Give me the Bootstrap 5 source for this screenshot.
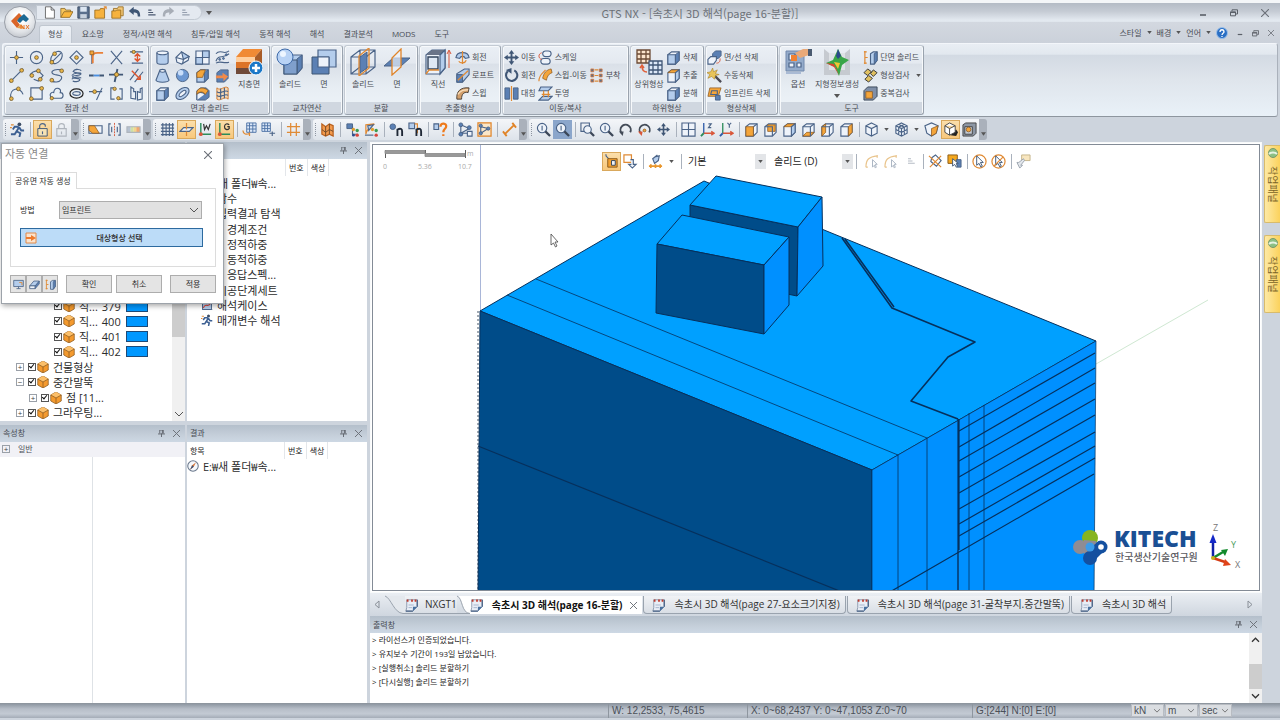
<!DOCTYPE html>
<html lang="ko">
<head>
<meta charset="utf-8">
<meta name="viewport" content="width=device-width, initial-scale=1">
<title>GTS NX</title>
<link href="https://cdn.jsdelivr.net/npm/bootstrap@5.3.0/dist/css/bootstrap.min.css" rel="stylesheet">
<style>
:root{--navy:#4a6387;--org:#e08a34;--ink:#474b53}
body{font-family:"Open Sans","Noto Sans CJK KR",sans-serif;font-size:8px;line-height:12px;color:var(--ink);background:#cdd4dd;overflow:hidden}
button,select,input{font:inherit;color:inherit}
button{border:0;background:none;padding:0}
a{color:inherit;text-decoration:none}
svg{flex:none;overflow:visible}
.i16{width:15px;height:15px}
.i28{width:28px;height:28px}
/* icon paint */
.s{fill:none;stroke:var(--navy);stroke-width:1.2}
.w{fill:#eef3fa;stroke:var(--navy);stroke-width:1.2}
.b{fill:#b4cdec;stroke:var(--navy);stroke-width:1.2}
.d{fill:#5b80b4;stroke:var(--navy);stroke-width:1}
.o{fill:none;stroke:var(--org);stroke-width:1.3}
.f{fill:#f4a53a;stroke:#8c5a20;stroke-width:.8}
.g{fill:none;stroke:#aeb4bc;stroke-width:1.2}
.k{fill:#e8b64a;stroke:#6b5428;stroke-width:.8}
/* title bar */
.titlebar{height:22px;border-top:3px solid #f4f6f8;background:linear-gradient(#b4bbc5,#c6ccd5 45%,#e3e9f0 90%,#dfe5ec)}
.apptitle{font-size:11px;color:#6c7178;font-family:"Noto Sans CJK KR",sans-serif}
.orb{left:4px;top:6px;width:32px;height:32px;border-radius:50%;border:1px solid #9a9fa8;background:radial-gradient(circle at 50% 35%,#fff 20%,#dfe2e6 60%,#a9aeb6)}
.qat{margin-left:36px;width:166px;height:15px;border:1px solid #c3cad3;border-radius:0 8px 8px 0;background:#e4e9f0;padding-left:4px}
.qat button{width:17px;height:14px;display:flex;align-items:center;justify-content:center}
.qat svg{width:13px;height:13px}
.wctl button{width:31px;display:flex;justify-content:center}
/* ribbon tabs */
.rtabs{height:21px;padding-left:39px;gap:1px;background:linear-gradient(#d3d8e0,#cbd1da)}
.rtabs a{padding:3px 9px 0;height:18px}
.rtabs a.on{background:linear-gradient(#eef2f7,#e4e9f0);border:1px solid #c0c7d0;border-bottom:0;border-radius:3px 3px 0 0;padding:2px 8px 0}
.rmenu{gap:5px;padding-right:6px;height:21px}
.ribbon{height:74px;margin:0 2px;padding:1px;gap:1px;border:1px solid #b7bec8;border-color:#f3f6fa #aab1bb #8e969f #f3f6fa;border-radius:3px;background:linear-gradient(#e9eef4,#e2e8ef 14%,#d3dae3 16%,#dfe5ec 50%,#e9f1f8)}
.rgrp{display:flex;flex-direction:column;border:1px solid #a9b2bd;border-color:#c3cad3 #9aa3ae #9aa3ae #c3cad3;border-radius:3px;box-shadow:inset 0 0 0 1px #f7f9fb;background:linear-gradient(#eaeff5,#e4e9f0 25%,#dae0e8 27%,#e7edf3 60%,#eef4f9);padding-top:2px}
.rgrp footer{height:12px;line-height:12px;margin:0 1px;text-align:center;background:#d0d7e0}
.rbody{height:56px;display:flex;padding:0 1px}
.tools{display:grid;grid-template-rows:repeat(3,18px);grid-auto-columns:20px;grid-auto-flow:column;align-content:start}
.tools button{display:flex;align-items:center;justify-content:center}
.rows3{display:grid;grid-template-rows:repeat(3,18px);grid-auto-flow:column;align-content:start;column-gap:2px}
.rows3 button,.rows3 div{display:flex;align-items:center;gap:2px;white-space:nowrap}
.bigb{display:flex;flex-direction:column;align-items:center;min-width:34px;white-space:nowrap}
.bigb svg{margin-bottom:2px}
.g1{width:145px}.g2{width:120px}.g3{width:72px}.g4{width:74px}.g5{width:82px}.g6{width:127px}.g7{width:74px}.g8{width:73px}.g9{width:145px}
/* toolbars */
.tbars{height:25px;padding:2px 3px;background:#cdd4dd}
.tbar{height:21px;display:flex;align-items:center;padding-left:2px;background:linear-gradient(#f4f6f9,#dde3ea);border-radius:3px 0 0 3px}
.tbar:before{content:"";width:2px;height:13px;margin-right:1px;border-left:1px dotted #8c94a0}
.tbar button,.vbar button{width:19px;height:19px;display:flex;align-items:center;justify-content:center}
.tbar button.hl,.vbar button.hl{background:linear-gradient(#fbe0ae,#f8c679);outline:1px solid #d9a85c;outline-offset:-1px}
.tbar button.bl{background:#8ba6cb}
.tbar .dd{width:11px}
.sep{width:6px;height:15px;background:linear-gradient(#a9b1bc,#a9b1bc) center/1px 100% no-repeat}
.tend{width:8px;height:21px;background:#aab1bb;border-radius:0 3px 3px 0;display:flex;align-items:end;justify-content:center;margin-right:2px}
/* panes */
.dock{width:370px;gap:2px;padding-right:3px}
.lcol{width:185px}
.pane{background:#fff;flex:1 1 0;min-height:0;overflow:hidden}
.phead{height:17px;flex:none;display:flex;align-items:center;padding:0 5px 0 3px;background:linear-gradient(#b4bfcb,#c5cfda 60%,#cdd8e4)}
.phead svg{margin-left:8px}
.chead{display:flex;height:17px;flex:none;align-items:center;font-size:8px;color:#222}
.chead span{height:17px;line-height:17px;padding:0 3px;border-right:1px solid #e3e6ea}
.tree{font-size:11px;line-height:15px;color:#2c2c2c;margin:0;white-space:nowrap}
.tree li{display:flex;align-items:center;height:15px}
.tree .lv1{padding-left:14px}.tree .lv2{padding-left:30px}.tree .lv3{padding-left:40px}
.tree input{appearance:none;width:8px;height:8px;margin:0 1px 0 0;border:1px solid #555;background:#fff;position:relative;flex:none}
.tree input:checked:after{content:"";position:absolute;left:1px;top:-1px;width:3px;height:5px;border:solid #111;border-width:0 1px 1px 0;transform:rotate(40deg)}
.ltree{height:122px}.rtree{height:152px}
.ltree .lv2{padding-left:27px}.ltree .lv3{padding-left:54px}
.num{width:24px}
.swatch{width:22px;height:11px;background:#0098ff;border:1px solid #1d4a78}
.exp{width:8px;height:8px;border:1px solid #9aa0a8;margin:0 4px 0 2px;font-size:8px;line-height:5px;text-align:center;color:#444;flex:none}
.vscroll{width:13px;background:#f0f0f0;flex:none}
.thumb{background:#cdcdcd}
/* dialog */
.dlg{left:1px;top:1px;width:223px;height:161px;background:#fff;border:1px solid #9da3aa;box-shadow:1px 2px 5px #0005;z-index:5;padding:0 7px 0 8px;color:#2c2c2c}
.dlg h1{font-size:11px;line-height:20px;margin:0 0 0 -5px;color:#8a8a8a}
.dtab{border:1px solid #dcdcdc;border-bottom:0;width:67px;height:17px;line-height:15px;padding-left:4px;white-space:nowrap;background:#fff;margin-bottom:-1px;position:relative}
.dbox{border:1px solid #dcdcdc;height:79px;padding:12px 13px 0 9px}
.dsel{width:143px;height:18px;border:1px solid #adadad;border-radius:0;background:#e1e1e1;padding:0 2px;font-size:8px;color:#333;appearance:none}
.dpick{width:183px;height:19px;border:1px solid #2d6a9f;background:#bcdcf8;font-weight:500;margin-top:9px;padding-left:4px}
.dbtn{height:18px;width:46px;border:1px solid #adadad;background:#e4e4e4}
.dbtn.sm{width:16px}
/* viewport */
.view{border:1px solid #f8fafb;outline:1px solid #838b96;outline-offset:-3px;background:#fff;padding:2px 2px 1px;min-height:0}
.vbar{left:231px;top:8px;height:20px;color:#222;font-size:10px}
.vbar select{appearance:none;border:0;background:#fff;font-size:10px;padding:0}
.vbar .arr{width:11px;height:15px;background:#e3e5e8;display:flex;align-items:center;justify-content:center}
.pick1{width:71px}.pick2{width:76px}
/* document tabs */
.dtabs{height:23px;padding-top:3px;background:linear-gradient(#eaeef3,#cfd6df);font-size:10px;line-height:17px;color:#333}
.dtabs a{height:18px;display:flex;align-items:center;white-space:nowrap;gap:8px;border:1px solid #9aa3ae;border-top:0;border-radius:0 0 4px 4px;background:linear-gradient(#f0f2f5,#d9dee5);padding:0 5px 0 8px;margin-right:1px}
.dtabs a.cur{background:#fff;font-weight:700;color:#111;border:0;border-radius:0;padding-left:0}
.dtabs a.fst{border-left:0;border-right:0;border-radius:0;gap:6px;margin:0;padding:0}
.out{height:70px;background:#fff;color:#222;line-height:14px}
.out p{margin:0;padding-left:2px}
.side{width:16px;margin-left:2px;padding-top:3px;gap:12px}
.side button{height:78px;width:16px;background:linear-gradient(90deg,#fde9a4,#fbd25c);border:1px solid #d8bb6c;border-right:0;display:flex;flex-direction:column;align-items:center;gap:8px;padding-top:2px;font-size:10px;color:#7a6428;border-radius:2px 0 0 2px}
.side span{writing-mode:vertical-rl;text-orientation:sideways;line-height:12px}
.status{height:15px;border-top:1px solid #8e969f;background:linear-gradient(#8f98a3,#b7bec8 35%,#c3cad3 70%,#a4acb7);font-family:"Liberation Sans","Noto Sans CJK KR",sans-serif;font-size:10px;line-height:14px;color:#4b5058;white-space:nowrap;margin-bottom:2px;gap:1px}
.status>div{border-left:1px solid #8e969f;padding-left:3px}
.st1{width:138px}.st2{width:224px}.st3{width:158px}
.status select{appearance:none;border:1px solid #b8bcc2;background:#dadde1;height:13px;width:33px;padding:0 2px;line-height:11px;border-radius:0}
.chev{position:relative}
.chev svg{position:absolute;right:4px;top:50%;margin-top:-2px;pointer-events:none}
</style>
</head>
<body class="d-flex flex-column vh-100">
<svg width="0" height="0" class="position-absolute" aria-hidden="true"><defs>
<symbol id="dn" viewBox="0 0 6 4"><path d="M0 0h6L3 4z" fill="#555"/></symbol>
<symbol id="cv" viewBox="0 0 8 5"><path d="M0 0l4 4 4-4" fill="none" stroke="#555"/></symbol>
<symbol id="x" viewBox="0 0 8 8"><path d="M0 0l8 8M8 0L0 8" fill="none" stroke="#6b7078" stroke-width="1.1"/></symbol>
<symbol id="pin" viewBox="0 0 8 8"><path d="M2 0h4v4M2 0v4M5 0v4M0 4.500h8M4 4v4" fill="none" stroke="#5b6068"/></symbol>
<symbol id="min" viewBox="0 0 8 8"><path d="M1 6h6" stroke="#5b6068" stroke-width="1.6"/></symbol>
<symbol id="res" viewBox="0 0 8 8"><path d="M2 2V.800h5.500V5H6M.5 2.800h5v4h-5zM.5 3.500h5" fill="none" stroke="#5b6068"/></symbol>
<symbol id="new" viewBox="0 0 16 16"><path d="M3 1h7l4 4v10H3zM10 1v4h4" fill="#fff" stroke="#555"/></symbol>
<symbol id="open" viewBox="0 0 16 16"><path d="M1 14V3h5l1 2h6v3" fill="#f7c65c" stroke="#8a6a2a"/><path d="M1 14l4-7h11l-4 7z" fill="#f9b63c" stroke="#8a6a2a"/></symbol>
<symbol id="save" viewBox="0 0 16 16"><path d="M1 1h14v14H1z" fill="#5a6f8c" stroke="#33445c"/><path d="M4 1h8v6H4z" fill="#dce6f2"/><path d="M4 10h8v5H4z" fill="#c8d2de"/></symbol>
<symbol id="fold" viewBox="0 0 16 16"><path d="M1 5h6l1-2h5v12H1z" fill="#f6b23e" stroke="#94691f"/><path d="M11 4l4-3M12 1h3v3" class="o"/></symbol>
<symbol id="fold2" viewBox="0 0 16 16"><path d="M3 3h5l1-2h6v11H3z" fill="#f4c978" stroke="#94691f"/><path d="M1 6h5l1-1h5v10H1z" fill="#f6b23e" stroke="#94691f"/></symbol>
<symbol id="undo" viewBox="0 0 16 16"><path d="M1 6l6-5v3c6 0 8 3 8 9h-3c0-4-1-5-5-5v3z" fill="#3f5675"/></symbol>
<symbol id="redo" viewBox="0 0 16 16"><path d="M15 6L9 1v3C3 4 1 7 1 13h3c0-4 1-5 5-5v3z" fill="#a7adb6"/></symbol>
<symbol id="lst" viewBox="0 0 16 16"><path d="M4 5h4M4 8h6M4 11h9" stroke="#4a5870" stroke-width="1.500"/></symbol>
<symbol id="p1" viewBox="0 0 16 16"><path d="M8 1v14M1 8h14" class="s"/><circle cx="8" cy="8" r="2" class="k"/></symbol>
<symbol id="p2" viewBox="0 0 16 16"><path d="M1 15L15 1" class="s"/><circle cx="2.500" cy="13.500" r="2" class="k"/><circle cx="13.500" cy="2.500" r="2" class="k"/></symbol>
<symbol id="p3" viewBox="0 0 16 16"><path d="M2 13C0 2 12 0 15 9" class="s"/><circle cx="2.500" cy="13.500" r="2" class="k"/><circle cx="10" cy="3" r="2" class="k"/></symbol>
<symbol id="p4" viewBox="0 0 16 16"><circle cx="8" cy="8" r="6.500" class="s"/><circle cx="8" cy="8" r="2" class="k"/></symbol>
<symbol id="p5" viewBox="0 0 16 16"><path d="M1 8c1-3 5-5 9-5l5 5-5 6-5-2" class="s"/><circle cx="3" cy="8" r="2" class="k"/><circle cx="10" cy="3" r="2" class="k"/><circle cx="12" cy="12" r="2" class="k"/></symbol>
<symbol id="p6" viewBox="0 0 16 16"><path d="M2 2h12v12H2z" class="s"/><circle cx="2.500" cy="13.500" r="2" class="k"/><circle cx="13.500" cy="2.500" r="2" class="k"/></symbol>
<symbol id="p7" viewBox="0 0 16 16"><ellipse cx="8" cy="8" rx="5" ry="7.500" transform="rotate(40 8 8)" class="s"/><path d="M3 13L13 3" class="s"/><circle cx="6" cy="4" r="2" class="k"/><circle cx="3" cy="13" r="2" class="k"/></symbol>
<symbol id="p8" viewBox="0 0 16 16"><path d="M14 2C2 0 1 6 6 7s9 1 7 5-8 3-10 2" class="s"/><circle cx="13.500" cy="3" r="2" class="k"/><circle cx="3" cy="13" r="2" class="k"/></symbol>
<symbol id="p9" viewBox="0 0 16 16"><path d="M3 13C-1 9 3 6 5 7 6 0 14 2 12 7c4 0 4 6 0 6z" class="s"/><circle cx="3" cy="13" r="1.800" class="k"/></symbol>
<symbol id="p10" viewBox="0 0 16 16"><path d="M8 1l7 7-7 7-7-7z" class="s"/><circle cx="8" cy="8" r="2" class="k"/></symbol>
<symbol id="p11" viewBox="0 0 16 16"><path d="M4 14c8 2 10-3 4-3s-5-3 0-3 7-3 1-3-5-3 0-4M3 12c2-3 9-3 10-1M3 8c2-3 9-3 10-1M4 4c2-3 8-3 9-1" class="s"/></symbol>
<symbol id="p12" viewBox="0 0 16 16"><ellipse cx="8" cy="8" rx="7" ry="5" fill="none" stroke="#222" stroke-width="1.300"/><ellipse cx="8" cy="8" rx="4" ry="2" class="s"/></symbol>
<symbol id="p13" viewBox="0 0 16 16"><path d="M3 15V3" class="s"/><path d="M4 14V8c0-4 1-5 5-5h6" fill="none" stroke="#e9803a" stroke-width="2"/><path d="M1 1h4v4H1z" class="f"/></symbol>
<symbol id="p14" viewBox="0 0 16 16"><path d="M0 8h5M11 8h5" stroke="#3f5675" stroke-width="2"/><path d="M5 8h6" stroke="#4a8fe0" stroke-width="2"/></symbol>
<symbol id="p15" viewBox="0 0 16 16"><path d="M0 6h14M14 2L8 15" class="s"/><circle cx="6" cy="6" r="2" class="k"/></symbol>
<symbol id="p16" viewBox="0 0 16 16"><path d="M2 1l12 14M14 1L2 15" class="s" stroke-width="1.500"/></symbol>
<symbol id="p17" viewBox="0 0 16 16"><path d="M0 7h15M9 1L6 15" stroke="#3f5675" stroke-width="2"/><circle cx="8" cy="7" r="2.200" class="k"/></symbol>
<symbol id="p18" viewBox="0 0 16 16"><path d="M5 2H2v12h4M10 14h4V3h-3" class="s"/><circle cx="6" cy="3" r="1.800" class="k"/><circle cx="10" cy="13" r="1.800" class="k"/></symbol>
<symbol id="p19" viewBox="0 0 16 16"><path d="M1 2h14M3 14h12" class="s"/><path d="M9 4v8M6 7l3-3 3 3M6 9l3 3 3-3" fill="none" stroke="#e0552c" stroke-width="1.500"/><circle cx="5" cy="2" r="1.800" class="k"/></symbol>
<symbol id="p20" viewBox="0 0 16 16"><path d="M1 13L10 1M6 15l9-11" class="s"/><path d="M3 3l9 9M8 12h4V8" fill="none" stroke="#e0552c" stroke-width="1.500"/></symbol>
<symbol id="p21" viewBox="0 0 16 16"><path d="M2 1v12l5 1V6H5V3zM9 6v9l5-1V2l-2 1v4z" class="s"/></symbol>
<symbol id="cyl" viewBox="0 0 16 16"><path d="M2 3v10c0 3 12 3 12 0V3" class="b"/><ellipse cx="8" cy="3" rx="6" ry="2" class="w"/></symbol>
<symbol id="cone" viewBox="0 0 16 16"><path d="M5 3L1 13c1 3 13 3 14 0L11 3" class="b"/><ellipse cx="8" cy="3" rx="3" ry="1.500" class="w"/></symbol>
<symbol id="box" viewBox="0 0 16 16"><path d="M2 5l4-3h8v9l-4 4H2z" class="w"/><path d="M10 5l4-3v9l-4 4z" class="d"/><path d="M2 5h8v10H2z" class="b"/></symbol>
<symbol id="wedge" viewBox="0 0 16 16"><path d="M1 8l6-6 8 5-1 4-7 4-5-2z" class="w"/><path d="M7 2l2 8 6-3z" class="b"/><path d="M1 8l8 2-1 5" class="s"/></symbol>
<symbol id="ball" viewBox="0 0 16 16"><circle cx="8" cy="8" r="6.500" fill="#6d98d2" stroke="#4a6387"/><circle cx="6" cy="5" r="3" fill="#c9defa"/></symbol>
<symbol id="ring" viewBox="0 0 16 16"><ellipse cx="8" cy="8" rx="8" ry="5" transform="rotate(-40 8 8)" class="b"/><ellipse cx="8" cy="8" rx="4.500" ry="2" transform="rotate(-40 8 8)" class="w"/></symbol>
<symbol id="quad" viewBox="0 0 16 16"><path d="M1 1h14v14H1z" class="w"/><path d="M1 8h7V1h7v7H8v7H1z" class="b"/></symbol>
<symbol id="boxo" viewBox="0 0 16 16"><path d="M2 5l4-3h8v9l-4 4H2z" class="w"/><path d="M2 5l4-3h8l-4 3z" class="f"/><path d="M10 5l4-3v9l-4 4z" class="b"/></symbol>
<symbol id="boxk" viewBox="0 0 16 16"><path d="M2 5l4-3h8v9l-4 4H2z" class="w"/><path d="M5 3h8v7H5z" class="f"/><path d="M2 5h8v10" class="s"/></symbol>
<symbol id="boxq" viewBox="0 0 16 16"><path d="M2 5l4-3h8v9l-4 4H2z" class="b"/><path d="M10 5l4-3v9l-4 4z" class="d"/><path d="M2 5l4-3h5l-3 8H2z" class="f"/></symbol>
<symbol id="boxf" viewBox="0 0 16 16"><path d="M2 5l4-3h8v9l-4 4H2z" class="w"/><path d="M10 5l4-3M10 5v10" class="s"/><path d="M2 5h8v10H2z" class="f"/></symbol>
<symbol id="boxr" viewBox="0 0 16 16"><path d="M2 5l4-3h8v9l-4 4H2zM2 5h8v10" class="w"/><path d="M10 5l4-3v9l-4 4z" class="f"/></symbol>
<symbol id="boxb" viewBox="0 0 16 16"><path d="M2 5l4-3h8v9l-4 4H2z" class="w"/><path d="M2 15l4-4h8l-4 4z" class="f"/><path d="M2 5h8v10M10 5l4-3" class="s"/></symbol>
<symbol id="boxl" viewBox="0 0 16 16"><path d="M2 5l4-3h8v9l-4 4H2z" class="w"/><path d="M2 5l4-3v9l-4 4z" class="f"/><path d="M2 5h8v10M10 5l4-3" class="s"/></symbol>
<symbol id="fan" viewBox="0 0 16 16"><path d="M2 5l4-3h6l3 3v7l-4 3H2z" class="d"/><path d="M2 15V9c0-3 8-3 8 0" class="w"/><path d="M2 6c2-5 8-5 12-1l-3 4C9 6 5 5 2 9z" class="f"/></symbol>
<symbol id="surf" viewBox="0 0 16 16"><path d="M1 4c5-6 8 2 14-3M1 14c5-3 8 1 14-1M1 12c3-8 7-2 14-8" class="s"/><circle cx="5" cy="10" r="1" class="d"/><circle cx="9" cy="9" r="1" class="d"/><circle cx="12" cy="5" r="1" class="d"/></symbol>
<symbol id="boxa" viewBox="0 0 16 16"><path d="M2 5l4-3h8v9l-4 4H2z" class="d"/><path d="M1 8h7V5l6 4-5 5v-3H1z" fill="#f08a4a"/></symbol>
<symbol id="weave" viewBox="0 0 16 16"><path d="M2 2c4 4 8-3 12 0v12c-4-4-8 3-12 0z" fill="#f6d8b4" stroke="#d07a30"/><path d="M2 6c4 4 8-3 12 0M2 10c4 4 8-3 12 0M6 3v11M10 2v11" class="s"/></symbol>
<symbol id="weaveo" viewBox="0 0 16 16"><path d="M2 2l4 3 4-3 4 2v11l-4-2-4 2-4-2z" fill="#f39a4c" stroke="#b85f1c" stroke-width="1.300"/><path d="M6 5v10M10 2v11M2 8l4 3 4-3 4 2" stroke="#6d4a2a" fill="none"/></symbol>
<symbol id="L1" viewBox="0 0 28 28"><path d="M1 9L8 1h19L20 9z" fill="#f08a35"/><path d="M1 9h19v5H1z" fill="#ffcf9e"/><path d="M1 14h19v6H1z" fill="#dc7428"/><path d="M1 20h19v6H1z" fill="#6f4a3a"/><path d="M20 9l7-8v17l-7 8z" fill="#a85c28"/><circle cx="21" cy="20" r="7" fill="#1b78c8" stroke="#fff"/><path d="M21 16v8M17 20h8" stroke="#fff" stroke-width="2.500"/></symbol>
<symbol id="L2" viewBox="0 0 28 28"><path d="M8 12l6-5h12v13l-5 6H8z" class="b"/><path d="M21 11l5-4v13l-5 6z" class="d"/><path d="M8 12h13v14H8z" fill="#7f9fcc" stroke="#3f5675"/><circle cx="9" cy="9" r="8" fill="#b9d3f5" stroke="#3f6aa8"/><circle cx="7" cy="6" r="3" fill="#eef6ff"/></symbol>
<symbol id="L3" viewBox="0 0 28 28"><path d="M8 2h18v17H8z" class="b"/><path d="M2 9h17v17H2z" fill="#5b80b4" stroke="#3f5675"/><path d="M8 9h11v10H8z" class="w"/></symbol>
<symbol id="L4" viewBox="0 0 28 28"><path d="M2 9l9-7h15v17l-9 7H2zM2 9h15v17M17 9l9-7M11 2v17l-9 7M11 19h15" class="s"/><path d="M11 9l7-5v16l-7 5z" class="d"/><path d="M10 8l10-8v20l-10 8z" class="o"/></symbol>
<symbol id="L5" viewBox="0 0 28 28"><path d="M1 18L10 10h17l-9 8z" class="d"/><path d="M9 10v17l9-8V1z" fill="#eef3faaa" stroke="#e08428" stroke-width="1.300"/></symbol>
<symbol id="L6" viewBox="0 0 28 28"><path d="M2 7l6-5h13v18l-5 6H2z" class="w"/><path d="M2 7l6-5h13l-5 5z" fill="#6a7488"/><path d="M16 7l5-5v18l-5 6z" class="b"/><path d="M4 9h10v12H4z" fill="#dfe8f4" stroke="#33445c" stroke-width="1.400"/><path d="M2 26l3-4h10" class="o"/><path d="M25 20V3M23 6l2-4 2 4" stroke="#d9573a" fill="none"/></symbol>
<symbol id="L7" viewBox="0 0 28 28"><path d="M2 2h13v13H2zM6 2v13M11 2v13M2 6h13M2 11h13" fill="#fbe4cc" stroke="#6b4a34" stroke-width="1.300"/><path d="M14 13h13v13H14zM18 13v13M23 13v13M14 17h13M14 22h13" fill="#dce8f8" stroke="#3f5675" stroke-width="1.300"/><path d="M12 24c-4 0-5-2-5-6M5 20l2-3 2 3" fill="none" stroke="#e0603a" stroke-width="1.500"/></symbol>
<symbol id="L8" viewBox="0 0 28 28"><path d="M2 3h18v20H2z" fill="#94abca" stroke="#7088ac"/><path d="M5 6h6v6H5z" class="w"/><path d="M7 7h6v6H7z" fill="#f08030"/><path d="M13 15h4v4h-4zM5 15h5v4H5z" class="w"/><path d="M2 25h15" stroke="#a9bad4" stroke-width="2"/><path d="M11 5l8-4h6v6l-9 3z" fill="#e9a978"/><path d="M24 1h4v7h-4z" fill="#4a5a70"/></symbol>
<symbol id="L9" viewBox="0 0 28 28"><path d="M1 1l5 4v17l-5 5zM27 1l-5 4v17l5 5zM6 22h16l5 5H1z" fill="#c6cad0"/><path d="M6 5h16v17H6z" fill="#dfe2e6"/><path d="M15 1l4 8 7 3-7 5-3 11-4-9-9-4 7-3z" fill="#3aa648"/><path d="M15 1l3 7-3 3-2-3z" fill="#2c4a8c"/><path d="M3 15l8 1 5 11-5-8z" fill="#d8452e"/><path d="M11 14l6 1-2 6z" fill="#f2c534"/></symbol>
<symbol id="mir" viewBox="0 0 16 16"><path d="M1 2h5v12H1zM10 2h5v12h-5z" class="d"/><path d="M8 0v16" class="o"/></symbol>
<symbol id="rev" viewBox="0 0 16 16"><path d="M1 8C2 1 14 1 15 8l-4 1c-1-3-5-3-6 0z" class="b"/><path d="M8 1v14M4 12c2 3 7 2 8-1" class="o"/></symbol>
<symbol id="loft" viewBox="0 0 16 16"><path d="M2 6l8-5h5v6L8 15H2z" class="b"/><path d="M2 7h6v8H2z" class="d"/><path d="M3 13L14 3" class="o"/></symbol>
<symbol id="swp" viewBox="0 0 16 16"><path d="M2 14C1 6 6 1 15 2l-1 5C9 6 7 9 7 14z" fill="#d3a06c" stroke="#4a4038"/><path d="M3 9c3-5 7-5 11-5" stroke="#f8dcb8" fill="none" stroke-width="1.500"/></symbol>
<symbol id="mv" viewBox="0 0 16 16"><path d="M8 0l3 4H9v3h3V5l4 3-4 3V9H9v3h2l-3 4-3-4h2V9H4v2L0 8l4-3v2h3V4H5z" fill="#3f5675"/></symbol>
<symbol id="rot" viewBox="0 0 16 16"><path d="M11 2.500A6 6 0 1 1 4 3.500" fill="none" stroke="#3f5675" stroke-width="2.200"/><path d="M8 0v6L2 2z" fill="#3f5675"/></symbol>
<symbol id="scl" viewBox="0 0 16 16"><rect x="5" y="1" width="9" height="6" rx="3" class="w"/><rect x="3" y="9" width="10" height="6" rx="3" class="w"/><path d="M4 3c-4 1-4 6 0 7" stroke="#d9573a" fill="none"/></symbol>
<symbol id="swm" viewBox="0 0 16 16"><path d="M1 14C1 7 6 5 8 2" class="o" stroke-width="2.500"/><path d="M5 11c1-6 4-9 9-10l1 4c-3 1-5 3-6 8z" class="f"/></symbol>
<symbol id="prj" viewBox="0 0 16 16"><path d="M3 1h12l-4 4H1zM5 11h10l-4 4H1z" class="b"/><path d="M6 5v7M11 5v7M4 9h9" class="o"/></symbol>
<symbol id="att" viewBox="0 0 16 16"><path d="M2 1h3v3H2zM2 6.500h3v3H2zM2 12h3v3H2zM11 1h3v3h-3zM11 6.500h3v3h-3zM11 12h3v3h-3z" fill="#5f6f88" stroke="#d9773a" stroke-width=".8"/><path d="M6 2h4M6 8h4M6 14h4" class="o"/></symbol>
<symbol id="del" viewBox="0 0 16 16"><path d="M6 4l3-3h6v5l-3 3H6z" class="d"/><path d="M1 10l3-3h6v4l-3 4H1z" class="w"/><path d="M10 14c4 0 4-3 4-5" stroke="#d9573a" fill="none"/></symbol>
<symbol id="wand" viewBox="0 0 16 16"><path d="M7 7l8 8" stroke="#4a4a55" stroke-width="2.500"/><path d="M6 0l1 4 4-2-2 4 4 1-4 1-1 4-3-3-4 2 2-4-3-2 4-1z" fill="#e8c45a" stroke="#a87c20" stroke-width=".6"/></symbol>
<symbol id="imp" viewBox="0 0 16 16"><path d="M3 2h12l-3 9H1z" class="f"/><path d="M5 5h6v4H4z" class="s"/><path d="M9 10h5v5H9z" class="d"/></symbol>
<symbol id="sec" viewBox="0 0 16 16"><path d="M2 1v14M5 8H2M1 2h3M1 14h3" class="o" stroke-width="1.600"/><path d="M8 4l3-2h4v9l-3 4H8z" class="b"/><path d="M12 4l3-2v9l-3 4z" class="d"/></symbol>
<symbol id="chk" viewBox="0 0 16 16"><path d="M5 1l4 3-4 4-4-3zM11 2l4 3-4 4-3-3zM6 8l4 3-4 4-4-3z" fill="#e0c060" stroke="#333"/></symbol>
<symbol id="dup" viewBox="0 0 16 16"><path d="M1 5l4-4h10v10l-4 4H1z" fill="#7f8fa8" stroke="#3a4658"/><path d="M3 6h7v7H3z" class="f"/></symbol>
<symbol id="run" viewBox="0 0 16 16"><circle cx="10" cy="2.500" r="2" fill="#3c4d66"/><path d="M10 5L7 10l4 2-1 4M7 10l-2 3H1M9 5L5 5 3 8M10 6l2 3h3" fill="none" stroke="#3c5f92" stroke-width="2"/><path d="M1 3h3M0 6h2" class="o"/></symbol>
<symbol id="lock" viewBox="0 0 16 16"><path d="M5 7V4c0-3 6-3 6 0v1" class="s" stroke-width="1.600"/><path d="M3 7h10v8H3z" fill="#f6e2b4" stroke="#3f5675"/><path d="M8 10v3" class="s"/></symbol>
<symbol id="lockg" viewBox="0 0 16 16"><path d="M5 7V4c0-3 6-3 6 0v3M3 7h10v8H3zM8 10v3" class="g"/></symbol>
<symbol id="era" viewBox="0 0 16 16"><path d="M1 4h14v8H1z" class="w"/><path d="M1 4h6l5 8H5L1 9z" class="f"/></symbol>
<symbol id="brk" viewBox="0 0 16 16"><path d="M4 2H2v12h2M12 2h2v12h-2M5 5v6M11 5v6" class="s"/><path d="M8 1v14" stroke="#d9573a" stroke-dasharray="2 1"/></symbol>
<symbol id="clr" viewBox="0 0 16 16"><path d="M1 5h4v6H1z" fill="#b6c2d2"/><path d="M5 5h3v6H5z" fill="#cfe0a4"/><path d="M8 5h3v6H8z" fill="#f2d88a"/><path d="M11 5h4v6h-4z" fill="#f0a870"/><path d="M1 5h14v6H1z" class="g"/></symbol>
<symbol id="grd" viewBox="0 0 16 16"><path d="M3 1v14M6.500 1v14M10 1v14M13.500 1v14M1 3h14M1 6.500h14M1 10h14M1 13.500h14" class="s"/></symbol>
<symbol id="grdo" viewBox="0 0 16 16"><path d="M5 1v14M11 1v14M1 5h14M1 11h14" class="o" stroke-width="1.600"/></symbol>
<symbol id="pln" viewBox="0 0 16 16"><path d="M1 10l4-4h10l-4 4z" class="w"/><path d="M8 1v7M8 10v5" class="o"/></symbol>
<symbol id="axW" viewBox="0 0 16 16"><path d="M3 1v12h11" fill="none" stroke="#2c8c5a" stroke-width="1.500"/><path d="M6 2l1 6 2-4 2 4 2-6" stroke="#333" fill="none" stroke-width="1.300"/><circle cx="3" cy="13" r="2" fill="#d9573a"/></symbol>
<symbol id="axG" viewBox="0 0 16 16"><path d="M3 1v12h11" fill="none" stroke="#2c8c5a" stroke-width="1.500"/><path d="M13 3c-2-2-5-1-5 2s3 4 5 2V5h-2" stroke="#333" fill="none" stroke-width="1.300"/><circle cx="3" cy="13" r="2" fill="#d9573a"/></symbol>
<symbol id="axz" viewBox="0 0 16 16"><path d="M4 1v11" stroke="#2c5aa8" stroke-width="1.400"/><path d="M4 12h10M12 10l3 2-3 2" stroke="#d9573a" fill="none" stroke-width="1.400"/><path d="M1 15l3-3" stroke="#2c8c5a" stroke-width="2"/><path d="M9 2h3L9 6h3" class="s"/></symbol>
<symbol id="axy" viewBox="0 0 16 16"><path d="M4 1v11" stroke="#2c8c5a" stroke-width="1.400"/><path d="M4 12h10M12 10l3 2-3 2" stroke="#d9573a" fill="none" stroke-width="1.400"/><path d="M1 15l3-3" stroke="#2c5aa8" stroke-width="2"/><path d="M9 1l2 2 2-2M11 3v3" class="s"/></symbol>
<symbol id="tbl" viewBox="0 0 16 16"><path d="M5 1h10v10H5zM8 1v10M11.500 1v10M5 4h10M5 7.500h10" fill="#dce8f8" stroke="#4f74a8"/><path d="M1 9c0 4 4 5 7 3v3" class="o"/></symbol>
<symbol id="tbl2" viewBox="0 0 16 16"><path d="M1 1h9v9H1zM4 1v9M7 1v9M1 4h9M1 7h9" fill="#dce8f8" stroke="#4f74a8"/><path d="M9 12h6M12 10v5" class="s" stroke-width="2"/></symbol>
<symbol id="nod" viewBox="0 0 16 16"><path d="M2 2h6v5H2z" class="d"/><path d="M8 4v9h6" class="s"/><circle cx="9" cy="8" r="1.800" fill="#e0a030"/><circle cx="13" cy="9" r="1.800" fill="#3a9c50"/><circle cx="13" cy="14" r="1.800" fill="#d9453a"/><circle cx="9" cy="14" r="1.500" fill="#2c4a8c"/></symbol>
<symbol id="nod2" viewBox="0 0 16 16"><path d="M2 13V3l9-1M2 13C3 8 6 5 11 2" class="o"/><path d="M4 4l6-1-5 6z" class="b"/><circle cx="9" cy="8" r="1.800" fill="#e0a030"/><circle cx="13" cy="9" r="1.800" fill="#3a9c50"/><circle cx="13" cy="14" r="1.800" fill="#d9453a"/><path d="M1 14h9" class="s" stroke-width="2"/></symbol>
<symbol id="cht" viewBox="0 0 16 16"><path d="M2 1v13h13" class="s"/><path d="M2 3h12v11H2z" class="b"/><path d="M3 12c4-9 6 2 10-7" fill="none" stroke="#d9453a" stroke-width="1.500"/></symbol>
<symbol id="nn" viewBox="0 0 16 16"><circle cx="4" cy="5" r="3" class="d"/><path d="M9 15V8c4-2 5 0 5 2v5" fill="none" stroke="#1f2836" stroke-width="2"/></symbol>
<symbol id="nn2" viewBox="0 0 16 16"><path d="M1 1h6v6H1z" class="b"/><path d="M7 2h3v10" class="o"/><path d="M9 15V8c4-2 5 0 5 2v5" fill="none" stroke="#1f2836" stroke-width="2"/></symbol>
<symbol id="qm" viewBox="0 0 16 16"><path d="M1 2h5v6H1z" class="b"/><path d="M8 5c0-5 7-4 6 0 0 2-3 2-3 6M11 13v2" fill="none" stroke="#ee7a1c" stroke-width="2.400"/></symbol>
<symbol id="net" viewBox="0 0 16 16"><path d="M3 3v9l9-5-9-4M3 12h9" class="s"/><circle cx="3" cy="3" r="2" class="d"/><circle cx="3" cy="13" r="2" class="d"/><circle cx="12" cy="6" r="2" class="d"/><path d="M10 10h5v5h-5z" class="w"/></symbol>
<symbol id="neto" viewBox="0 0 16 16"><path d="M1 1h14v14H1z" fill="#fbe6c8" stroke="#e08428" stroke-width="1.300"/><path d="M4 5v7l8-5-8-2" class="s"/><circle cx="4" cy="4" r="1.700" class="d"/><circle cx="4" cy="12" r="1.700" class="d"/><circle cx="12" cy="7" r="1.700" class="d"/></symbol>
<symbol id="dim" viewBox="0 0 16 16"><path d="M3 13L13 3M1 10l4 5M11 1l4 5" fill="none" stroke="#e08428" stroke-width="2"/></symbol>
<symbol id="mag" viewBox="0 0 16 16"><circle cx="6.500" cy="6.500" r="5" class="w"/><path d="M10 10l5 5" stroke="#3c4758" stroke-width="2.400"/><path d="M6.500 4v5" class="s"/></symbol>
<symbol id="magb" viewBox="0 0 16 16"><path d="M1 1h9v9H1z" class="s"/><circle cx="8" cy="8" r="4" class="w"/><path d="M11 11l4 4" stroke="#3c4758" stroke-width="2.400"/></symbol>
<symbol id="ro" viewBox="0 0 16 16"><path d="M4 12A5.500 5.500 0 1 1 13 11" fill="none" stroke="#444c58" stroke-width="2"/><path d="M1 10h5l-1 5z" fill="#444c58"/></symbol>
<symbol id="roo" viewBox="0 0 16 16"><path d="M4 12A5.500 5.500 0 1 1 13 11" fill="none" stroke="#444c58" stroke-width="1.800"/><circle cx="8" cy="9" r="1.500" class="f"/><path d="M1 10h5l-1 5z" fill="#d9573a"/></symbol>
<symbol id="four" viewBox="0 0 16 16"><path d="M1 1h14v14H1zM8 1v14M1 8h14" class="w"/></symbol>
<symbol id="mon" viewBox="0 0 16 16"><path d="M1 2h14v9H1z" class="b"/><path d="M5 14h6M8 11v3" class="s"/><path d="M9 5h4v4" class="o"/></symbol>
<symbol id="ers" viewBox="0 0 16 16"><path d="M1 10l6-7h8l-6 7z" class="b"/><path d="M1 10h8v4H1z" class="w"/><path d="M9 10l6-7v4l-6 7z" class="d"/></symbol>
<symbol id="cube" viewBox="0 0 16 16"><path d="M8 1l6 3v8l-6 3-6-3V4zM2 4l6 3 6-3M8 7v8" class="w"/></symbol>
<symbol id="cubem" viewBox="0 0 16 16"><path d="M8 1l6 3v8l-6 3-6-3V4zM2 4l6 3 6-3M8 7v8M5 2.500l6 3v8M11 2.500l-6 3v8M2 8l6 3 6-3" class="w" stroke-width=".9"/></symbol>
<symbol id="cubeo" viewBox="0 0 16 16"><path d="M1 4l7-3 7 3-2 8-5 3-5-3z" class="w"/><path d="M8 7l7-3-2 8-5 3z" class="f"/></symbol>
<symbol id="cubes" viewBox="0 0 16 16"><path d="M8 14l6 1 2-4-2-3z" fill="#222"/><path d="M7 1l6 3v7l-6 3-5-3V4zM2 4l5 3 6-3M7 7v7" fill="#fff" stroke="#444"/></symbol>
<symbol id="cubep" viewBox="0 0 16 16"><path d="M1 3l3-2h11v11l-3 3H1z" fill="#8c96a4" stroke="#444"/><path d="M3 5h8v8H3z" fill="#c4ccd6" stroke="#444"/><circle cx="7" cy="8" r="2.500" class="f"/></symbol>
<symbol id="cb" viewBox="0 0 16 16"><path d="M8 0l7 4v8l-7 4-7-4V4z" fill="#f49a2e" stroke="#8a5a20"/><path d="M1 4l7-4 7 4-7 4z" fill="#fbbf6a"/><path d="M1 4l7 4 7-4M8 8v8" fill="none" stroke="#8a5a20"/></symbol>
<symbol id="doc" viewBox="0 0 16 16"><path d="M2 2h12v8l-5 5H1l1-4z" fill="#e9eef6" stroke="#8593a8"/><path d="M9 15v-5h5z" fill="#48709f"/><path d="M14 2v8M1 15h8" stroke="#4a6387" stroke-width="1.500"/><path d="M2 3h2M7 3h2M11 3h2" stroke="#c0392b" stroke-width="2.500"/><path d="M4 8h6M4 11h4" stroke="#9fb0c8"/></symbol>
<symbol id="cmp" viewBox="0 0 16 16"><circle cx="8" cy="8" r="7" fill="#f6f9fc" stroke="#6a788c" stroke-width="1.400"/><path d="M12 3l-3 6-5 4 3-6z" fill="#d9773a"/><path d="M4 13l3-6 2 2z" fill="#33507c"/></symbol>
<symbol id="cur" viewBox="0 0 16 16"><path d="M5 2v10l2.500-2 2 4 1.500-1-2-4h3z" fill="#fff" stroke="#3f5675"/></symbol>
<symbol id="curo" viewBox="0 0 16 16"><circle cx="8" cy="8" r="7" class="o"/><use href="#cur"/></symbol>
<symbol id="curx" viewBox="0 0 16 16"><circle cx="8" cy="8" r="7" class="o"/><use href="#cur"/><path d="M3 13L13 3" class="o"/></symbol>
<symbol id="ln1" viewBox="0 0 16 16"><path d="M1 14C1 6 4 3 13 2M1 14h2M13 1v3" fill="none" stroke="#e9c48c" stroke-width="1.300"/><path d="M8 6v8l2-2 1 3 1-1-1-3h2z" fill="#fff" stroke="#a8b2c0"/></symbol>
<symbol id="sel1" viewBox="0 0 16 16"><path d="M1 1h2M2 2l5 5" class="s"/><path d="M4 5h10v9H4z" fill="#f5a030" stroke="#8a5a1a"/><path d="M8 7h4v5H8z" fill="#eef3fa" stroke="#33445c"/></symbol>
<symbol id="sel2" viewBox="0 0 16 16"><path d="M1 1h8v8H1z" class="o"/><path d="M8 6h3v5h3l-4 4-4-4h3" class="w"/></symbol>
<symbol id="sel3" viewBox="0 0 16 16"><path d="M10 1L5 5l2 5 4-3 1-5-4 1" class="b"/><path d="M1 13h14M3 11v4M8 11v4M13 11v4" fill="none" stroke="#e9962c" stroke-width="1.800"/></symbol>
<symbol id="nox" viewBox="0 0 16 16"><path d="M4 4l4-3 6 6-5 6-6-5z" class="s"/><path d="M1 2l13 12M14 2L2 14" class="o"/></symbol>
<symbol id="selb" viewBox="0 0 16 16"><path d="M1 1h10v9H1z" fill="#f5a81e" stroke="#8a5a1a"/><path d="M10 6h5v8h-5z" class="d"/><path d="M6 5v8l2-2 2 3 1-1-1-3h2z" fill="#fff" stroke="#3f5675"/></symbol>
<symbol id="selg" viewBox="0 0 16 16"><path d="M6 1h9v6H6z" fill="#f8e6bf" stroke="#c5b48c"/><path d="M8 5L3 9H1l3 6 3-3H5l4-5z" fill="#e3e7ec" stroke="#9aa3ae"/></symbol>
</defs></svg>

<header class="position-relative">
  <div class="titlebar d-flex align-items-center position-relative">
    <div class="qat d-flex align-items-center">
      <button aria-label="새로 만들기"><svg><use href="#new"/></svg></button><button aria-label="열기"><svg><use href="#open"/></svg></button><button aria-label="저장"><svg><use href="#save"/></svg></button><button aria-label="가져오기"><svg><use href="#fold"/></svg></button><button aria-label="내보내기"><svg><use href="#fold2"/></svg></button><button aria-label="실행취소"><svg><use href="#undo"/></svg></button><button aria-label="취소 목록"><svg><use href="#lst"/></svg></button><button aria-label="다시실행"><svg><use href="#redo"/></svg></button><button aria-label="다시실행 목록"><svg opacity=".5"><use href="#lst"/></svg></button>
    </div>
    <svg class="ms-1" width="6" height="4"><use href="#dn"/></svg>
    <div class="apptitle position-absolute start-50 translate-middle-x ps-5"><span class="ps-5 ms-4">GTS NX - [속초시 3D 해석(page 16-분할)]</span></div>
    <div class="wctl d-flex ms-auto"><button aria-label="최소화"><svg width="8" height="8"><use href="#min"/></svg></button><button aria-label="복원"><svg width="8" height="8"><use href="#res"/></svg></button><button aria-label="닫기"><svg width="8" height="8"><use href="#x"/></svg></button></div>
  </div>
  <button class="orb position-absolute" aria-label="메뉴"><svg width="22" height="22" viewBox="0 0 22 22"><path d="M10 2L2 10l6 7 3-3-3-4 5-5z" fill="#d9662a"/><path d="M10 7l5-4 5 5-3 3-3-2-3 3-3-2z" fill="#1d6a94"/><path d="M8 17l4-4 4 5" fill="#e8a04a"/><path d="M12 18v-4l3 4v-4M17 14l3 4M20 14l-3 4" stroke="#e8762a" fill="none"/></svg></button>
  <nav class="rtabs d-flex align-items-end"><a href="#" class="on">형상</a><a href="#">요소망</a><a href="#">정적/사면 해석</a><a href="#">침투/압밀 해석</a><a href="#">동적 해석</a><a href="#">해석</a><a href="#">결과분석</a><a href="#">MODS</a><a href="#">도구</a>
    <div class="rmenu d-flex align-items-center ms-auto"><button>스타일</button><svg width="5" height="3"><use href="#dn"/></svg><button>배경</button><svg width="5" height="3"><use href="#dn"/></svg><button>언어</button><svg width="5" height="3"><use href="#dn"/></svg><button aria-label="도움말"><svg width="12" height="12" viewBox="0 0 12 12"><circle cx="6" cy="6" r="5.500" fill="#2a6fc4" stroke="#9cc0ea"/><path d="M4 5c0-3 4-3 4 0 0 1-2 1-2 3M6 9v1" stroke="#fff" fill="none" stroke-width="1.300"/></svg></button><button class="ms-1" aria-label="최소화"><svg width="6" height="6"><use href="#min"/></svg></button><button class="ms-1" aria-label="복원"><svg width="7" height="7"><use href="#res"/></svg></button><button class="ms-1" aria-label="닫기"><svg width="6" height="6"><use href="#x"/></svg></button></div>
  </nav>
  <div class="ribbon d-flex">
    <section class="rgrp g1"><div class="rbody"><div class="tools">
      <button aria-label="점"><svg class="i16"><use href="#p1"/></svg></button><button aria-label="선"><svg class="i16"><use href="#p2"/></svg></button><button aria-label="호"><svg class="i16"><use href="#p3"/></svg></button>
      <button aria-label="원"><svg class="i16"><use href="#p4"/></svg></button><button aria-label="다각선"><svg class="i16"><use href="#p5"/></svg></button><button aria-label="사각형"><svg class="i16"><use href="#p6"/></svg></button>
      <button aria-label="타원"><svg class="i16"><use href="#p7"/></svg></button><button aria-label="스플라인"><svg class="i16"><use href="#p8"/></svg></button><button aria-label="프로파일"><svg class="i16"><use href="#p9"/></svg></button>
      <button aria-label="다각형"><svg class="i16"><use href="#p10"/></svg></button><button aria-label="나선"><svg class="i16"><use href="#p11"/></svg></button><button aria-label="터널"><svg class="i16"><use href="#p12"/></svg></button>
      <button aria-label="모깎기"><svg class="i16"><use href="#p13"/></svg></button><button aria-label="병합"><svg class="i16"><use href="#p14"/></svg></button><button aria-label="연장"><svg class="i16"><use href="#p15"/></svg></button>
      <button aria-label="교차"><svg class="i16"><use href="#p16"/></svg></button><button aria-label="자르기"><svg class="i16"><use href="#p17"/></svg></button><button aria-label="연결"><svg class="i16"><use href="#p18"/></svg></button>
      <button aria-label="최단거리"><svg class="i16"><use href="#p19"/></svg></button><button aria-label="간격"><svg class="i16"><use href="#p20"/></svg></button><button aria-label="단면"><svg class="i16"><use href="#p21"/></svg></button>
    </div></div><footer>점과 선</footer></section>
    <section class="rgrp g2"><div class="rbody"><div class="tools">
      <button aria-label="원통"><svg class="i16"><use href="#cyl"/></svg></button><button aria-label="원뿔"><svg class="i16"><use href="#cone"/></svg></button><button aria-label="상자"><svg class="i16"><use href="#box"/></svg></button>
      <button aria-label="쐐기"><svg class="i16"><use href="#wedge"/></svg></button><button aria-label="구"><svg class="i16"><use href="#ball"/></svg></button><button aria-label="토러스"><svg class="i16"><use href="#ring"/></svg></button>
      <button aria-label="면 만들기"><svg class="i16"><use href="#quad"/></svg></button><button aria-label="면 추가"><svg class="i16"><use href="#boxq"/></svg></button><button aria-label="면 모깎기"><svg class="i16"><use href="#fan"/></svg></button>
      <button aria-label="점 면"><svg class="i16"><use href="#surf"/></svg></button><button aria-label="솔리드 변경"><svg class="i16"><use href="#boxa"/></svg></button><button aria-label="면 봉합"><svg class="i16"><use href="#weave"/></svg></button>
    </div><button class="bigb"><svg class="i28"><use href="#L1"/></svg>지층면</button></div><footer>면과 솔리드</footer></section>
    <section class="rgrp g3"><div class="rbody"><button class="bigb"><svg class="i28"><use href="#L2"/></svg>솔리드</button><button class="bigb"><svg class="i28"><use href="#L3"/></svg>면</button></div><footer>교차연산</footer></section>
    <section class="rgrp g4"><div class="rbody"><button class="bigb"><svg class="i28"><use href="#L4"/></svg>솔리드</button><button class="bigb"><svg class="i28"><use href="#L5"/></svg>면</button></div><footer>분할</footer></section>
    <section class="rgrp g5"><div class="rbody"><button class="bigb"><svg class="i28"><use href="#L6"/></svg>직선</button><div class="rows3"><button><svg class="i16"><use href="#rev"/></svg>회전</button><button><svg class="i16"><use href="#loft"/></svg>로프트</button><button><svg class="i16"><use href="#swp"/></svg>스윕</button></div></div><footer>추출형상</footer></section>
    <section class="rgrp g6"><div class="rbody"><div class="rows3"><button><svg class="i16"><use href="#mv"/></svg>이동</button><button><svg class="i16"><use href="#rot"/></svg>회전</button><button><svg class="i16"><use href="#mir"/></svg>대칭</button><button><svg class="i16"><use href="#scl"/></svg>스케일</button><button><svg class="i16"><use href="#swm"/></svg>스윕-이동</button><button><svg class="i16"><use href="#prj"/></svg>투영</button><div></div><button><svg class="i16"><use href="#att"/></svg>부착</button></div></div><footer>이동/복사</footer></section>
    <section class="rgrp g7"><div class="rbody"><button class="bigb"><svg class="i28"><use href="#L7"/></svg>상위형상</button><div class="rows3"><button><svg class="i16"><use href="#box"/></svg>삭제</button><button><svg class="i16"><use href="#boxo"/></svg>추출</button><button><svg class="i16"><use href="#box"/></svg>분해</button></div></div><footer>하위형상</footer></section>
    <section class="rgrp g8"><div class="rbody"><div class="rows3"><button><svg class="i16"><use href="#del"/></svg>면/선 삭제</button><button><svg class="i16"><use href="#wand"/></svg>수동삭제</button><button><svg class="i16"><use href="#imp"/></svg>임프린트 삭제</button></div></div><footer>형상삭제</footer></section>
    <section class="rgrp g9"><div class="rbody"><button class="bigb"><svg class="i28"><use href="#L8"/></svg>옵션</button><button class="bigb"><svg class="i28"><use href="#L9"/></svg>지형정보생성<svg class="mt-1" width="6" height="4"><use href="#dn"/></svg></button><div class="rows3 ms-1"><button><svg class="i16"><use href="#sec"/></svg>단면 솔리드</button><button><svg class="i16"><use href="#chk"/></svg>형상검사<svg class="ms-1" width="5" height="3"><use href="#dn"/></svg></button><button><svg class="i16"><use href="#dup"/></svg>중복검사</button></div></div><footer>도구</footer></section>
  </div>
  <div class="tbars d-flex">
    <div class="tbar"><button aria-label="실행"><svg class="i16"><use href="#run"/></svg></button><i class="sep"></i><button class="hl" aria-label="잠금 해제"><svg class="i16"><use href="#lock"/></svg></button><button aria-label="잠금"><svg class="i16"><use href="#lockg"/></svg></button></div><div class="tend"><svg width="5" height="4" class="mb-1"><use href="#dn"/></svg></div>
    <div class="tbar"><button aria-label="지우기"><svg class="i16"><use href="#era"/></svg></button><button aria-label="분리"><svg class="i16"><use href="#brk"/></svg></button><button aria-label="색상"><svg class="i16"><use href="#clr"/></svg></button></div><div class="tend"><svg width="5" height="4" class="mb-1"><use href="#dn"/></svg></div>
    <div class="tbar"><button aria-label="격자"><svg class="i16"><use href="#grd"/></svg></button><button class="hl" aria-label="작업평면"><svg class="i16"><use href="#pln"/></svg></button><button aria-label="WCS"><svg class="i16"><use href="#axW"/></svg></button><button class="hl" aria-label="GCS"><svg class="i16"><use href="#axG"/></svg></button><i class="sep"></i><button aria-label="평면 이동"><svg class="i16"><use href="#tbl"/></svg></button><button aria-label="격자 설정"><svg class="i16"><use href="#tbl2"/></svg></button><i class="sep"></i><button aria-label="스냅"><svg class="i16"><use href="#grdo"/></svg></button></div><div class="tend"><svg width="5" height="4" class="mb-1"><use href="#dn"/></svg></div>
    <div class="tbar"><button aria-label="요소망"><svg class="i16"><use href="#weaveo"/></svg></button><i class="sep"></i><button aria-label="절점"><svg class="i16"><use href="#nod"/></svg></button><button aria-label="요소"><svg class="i16"><use href="#nod2"/></svg></button><i class="sep"></i><button aria-label="절점 번호"><svg class="i16"><use href="#nn"/></svg></button><button aria-label="요소 번호"><svg class="i16"><use href="#nn2"/></svg></button><i class="sep"></i><button aria-label="질의"><svg class="i16"><use href="#qm"/></svg></button><i class="sep"></i><button aria-label="연결"><svg class="i16"><use href="#net"/></svg></button><button aria-label="연결 확인"><svg class="i16"><use href="#neto"/></svg></button><i class="sep"></i><button aria-label="거리"><svg class="i16"><use href="#dim"/></svg></button></div><div class="tend"><svg width="5" height="4" class="mb-1"><use href="#dn"/></svg></div>
    <div class="tbar"><button aria-label="확대"><svg class="i16"><use href="#mag"/></svg></button><button class="bl" aria-label="전체 보기"><svg class="i16"><use href="#mag"/></svg></button><i class="sep"></i><button aria-label="창 확대"><svg class="i16"><use href="#magb"/></svg></button><button aria-label="동적 확대"><svg class="i16"><use href="#mag"/></svg></button><button aria-label="회전"><svg class="i16"><use href="#ro"/></svg></button><button aria-label="중심 회전"><svg class="i16"><use href="#roo"/></svg></button><button aria-label="이동"><svg width="13" height="13"><use href="#mv"/></svg></button><i class="sep"></i><button aria-label="분할"><svg class="i16"><use href="#four"/></svg></button><button aria-label="Z축"><svg class="i16"><use href="#axz"/></svg></button><button aria-label="Y축"><svg class="i16"><use href="#axy"/></svg></button><i class="sep"></i><button aria-label="정면"><svg class="i16"><use href="#boxf"/></svg></button><button aria-label="배면"><svg class="i16"><use href="#boxk"/></svg></button><button aria-label="평면"><svg class="i16"><use href="#boxo"/></svg></button><button aria-label="저면"><svg class="i16"><use href="#boxb"/></svg></button><button aria-label="좌측"><svg class="i16"><use href="#boxl"/></svg></button><button aria-label="우측"><svg class="i16"><use href="#boxr"/></svg></button><i class="sep"></i><button aria-label="형상"><svg class="i16"><use href="#cube"/></svg></button><button class="dd" aria-label="형상 목록"><svg width="5" height="3"><use href="#dn"/></svg></button><button aria-label="메쉬"><svg class="i16"><use href="#cubem"/></svg></button><button class="dd" aria-label="메쉬 목록"><svg width="5" height="3"><use href="#dn"/></svg></button><button aria-label="음영"><svg class="i16"><use href="#cubeo"/></svg></button><button class="hl" aria-label="그림자"><svg class="i16"><use href="#cubes"/></svg></button><button aria-label="투시"><svg class="i16"><use href="#cubep"/></svg></button></div><div class="tend"><svg width="5" height="4" class="mb-1"><use href="#dn"/></svg></div>
  </div>
</header>

<main class="d-flex flex-fill position-relative" style="min-height:0">
  <aside class="dock d-flex flex-shrink-0">
    <div class="lcol d-flex flex-column gap-1 flex-shrink-0">
      <section class="pane d-flex flex-column"><div class="phead"></div>
        <div class="d-flex flex-fill"><div class="d-flex flex-column justify-content-end flex-fill">
        <ul class="tree ltree list-unstyled d-flex flex-column justify-content-between">
          <li class="lv3"><input type="checkbox" checked aria-label="379"><svg width="12" height="12"><use href="#cb"/></svg><span class="ms-1 me-1">직...</span><span class="num">379</span><span class="swatch"></span></li>
          <li class="lv3"><input type="checkbox" checked aria-label="400"><svg width="12" height="12"><use href="#cb"/></svg><span class="ms-1 me-1">직...</span><span class="num">400</span><span class="swatch"></span></li>
          <li class="lv3"><input type="checkbox" checked aria-label="401"><svg width="12" height="12"><use href="#cb"/></svg><span class="ms-1 me-1">직...</span><span class="num">401</span><span class="swatch"></span></li>
          <li class="lv3"><input type="checkbox" checked aria-label="402"><svg width="12" height="12"><use href="#cb"/></svg><span class="ms-1 me-1">직...</span><span class="num">402</span><span class="swatch"></span></li>
          <li class="lv1"><span class="exp">+</span><input type="checkbox" checked id="c1"><svg width="12" height="12"><use href="#cb"/></svg><label class="ms-1" for="c1">건물형상</label></li>
          <li class="lv1"><span class="exp">−</span><input type="checkbox" checked id="c2"><svg width="12" height="12"><use href="#cb"/></svg><label class="ms-1" for="c2">중간말뚝</label></li>
          <li class="lv2"><span class="exp">+</span><input type="checkbox" checked id="c3"><svg width="12" height="12"><use href="#cb"/></svg><label class="ms-1" for="c3">점 [11...</label></li>
          <li class="lv1"><span class="exp">+</span><input type="checkbox" checked id="c4"><svg width="12" height="12"><use href="#cb"/></svg><label class="ms-1" for="c4">그라우팅...</label></li>
        </ul></div>
        <div class="vscroll d-flex flex-column"><div class="thumb" style="height:68%"></div><div class="flex-fill"></div><svg class="mx-auto mb-1" width="8" height="5"><use href="#cv"/></svg></div></div>
      </section>
      <section class="pane d-flex flex-column"><div class="phead">속성창<svg class="ms-auto" width="7" height="7"><use href="#pin"/></svg><svg width="7" height="7"><use href="#x"/></svg></div>
        <div class="d-flex align-items-center" style="background:#f1f1f6;height:15px"><span class="exp">+</span><span class="ms-1">일반</span></div>
        <div class="border-end w-50 flex-fill"></div></section>
    </div>
    <div class="d-flex flex-column gap-1 flex-fill">
      <section class="pane d-flex flex-column"><div class="phead"><svg class="ms-auto" width="7" height="7"><use href="#pin"/></svg><svg width="7" height="7"><use href="#x"/></svg></div>
        <div class="chead"><span style="width:99px">항목</span><span>번호</span><span>색상</span></div>
        <ul class="tree rtree list-unstyled d-flex flex-column justify-content-between">
          <li class="ps-1"><svg width="12" height="12"><use href="#cmp"/></svg>E:₩새 폴더₩속...</li><li class="lv2">함수</li><li class="lv2">입력결과 탐색</li><li class="lv3">경계조건</li><li class="lv3">정적하중</li><li class="lv3">동적하중</li><li class="lv3">응답스펙...</li><li class="lv2">시공단계세트</li>
          <li class="lv1"><svg width="12" height="12" class="me-1"><use href="#cht"/></svg>해석케이스</li><li class="lv1"><svg width="12" height="12" class="me-1"><use href="#run"/></svg>매개변수 해석</li>
        </ul></section>
      <section class="pane d-flex flex-column"><div class="phead">결과<svg class="ms-auto" width="7" height="7"><use href="#pin"/></svg><svg width="7" height="7"><use href="#x"/></svg></div>
        <div class="chead"><span style="width:98px">항목</span><span>번호</span><span>색상</span></div>
        <ul class="tree list-unstyled"><li><svg class="me-1" width="12" height="12"><use href="#cmp"/></svg>E:₩새 폴더₩속...</li></ul></section>
    </div>
  </aside>

  <form class="dlg position-absolute">
    <div class="d-flex align-items-center"><h1 class="fw-normal flex-fill">자동 연결</h1><button type="button" aria-label="닫기"><svg class="me-1" width="8" height="8"><use href="#x"/></svg></button></div>
    <div class="dtab mt-2 pt-0">공유면 자동 생성</div>
    <div class="dbox"><div class="d-flex align-items-center justify-content-between"><label for="method">방법</label><span class="chev"><select id="method" class="dsel"><option>임프린트</option></select><svg width="8" height="5"><use href="#cv"/></svg></span></div>
      <button type="button" class="dpick d-flex align-items-center"><svg width="12" height="12" viewBox="0 0 12 12"><path d="M1 1h10v10H1z" fill="#fbe3cc" stroke="#e08a4a"/><path d="M1 5h5V3l5 3-5 3V7H1z" fill="#ee7a2c"/></svg><span class="flex-fill text-center">대상형상 선택</span></button></div>
    <div class="d-flex mt-2"><button type="button" class="dbtn sm" aria-label="미리보기"><svg width="11" height="11"><use href="#mon"/></svg></button><button type="button" class="dbtn sm" aria-label="지우기"><svg width="11" height="11"><use href="#ers"/></svg></button><button type="button" class="dbtn sm" aria-label="설정"><svg width="11" height="11"><use href="#sec"/></svg></button>
      <button type="button" class="dbtn ms-auto">확인</button><button type="button" class="dbtn ms-1">취소</button><button type="button" class="dbtn ms-2">적용</button></div>
  </form>

  <div class="d-flex flex-column flex-fill" style="min-width:0">
    <section class="view flex-fill position-relative">
      <svg class="d-block w-100 h-100 overflow-hidden" viewBox="373 145 886 446" preserveAspectRatio="xMinYMin slice">
        <g fill="none" stroke="#333" stroke-width=".8"><path d="M385.500 150v8M425.500 150v6M465.500 150v8"/><path d="M385 150.500h40v3h-40zM425 153.500h40v3h-40z" fill="#999" stroke="#888"/></g>
        <g font-size="7" fill="#aaa"><text x="383" y="169">0</text><text x="418" y="169">5.36</text><text x="458" y="169">10.7</text><text x="467" y="156">m</text></g>
        <path d="M480.500 145v166" stroke="#a9b6d8"/><path d="M478 311v281" stroke="#456" stroke-dasharray="2 2"/>
        <path d="M1096 364L1208 300" stroke="#cfe8d2"/>
        <g stroke="#06305c" stroke-width="1" stroke-linejoin="round">
        <path d="M480 311L704 181 1096 341 872 470z" fill="#00a0ff"/>
        <path d="M480 311L872 470V600H478z" fill="#004c89"/>
        <path d="M872 470L1096 341 1094 600H872z" fill="#0090ff" stroke-width=".7"/>
        <g fill="none" stroke-width=".8"><path d="M507 295L898 455V600M536 279L927 438V600M969 413V600M984 405V600"/></g>
        <path d="M478 446L862 600M876 600L1094 474M959 431L1095 353M959 447L1095 368M959 461L1095 383M959 477L1095 399M959 493L1095 415M959 509L1095 432M959 524L1095 446M959 536L1095 458" fill="none" stroke-width="1.200"/>
        <path d="M958.500 419V550" stroke-width="2.200"/><path d="M958 550v50" stroke-width="1.400"/>
        <path d="M842 238L892 308 975 342 948 357 911 401 958 419M845 239L894 307" fill="none" stroke-width="1.600"/>
        <path d="M690 205L798 227 797 296 690 274z" fill="#004c89"/><path d="M716 176L822 197 798 227 690 205z" fill="#00a0ff"/><path d="M798 227L822 197 823 266 797 296z" fill="#0090ff"/>
        <path d="M682 215L789 237 764 265 657 244z" fill="#00a0ff"/><path d="M657 244L764 265V334L656 313z" fill="#004c89"/><path d="M764 265L789 237V305L764 334z" fill="#0090ff"/></g>
        <path d="M551 234v11l2.500-2 2 4 1.500-1-2-4h3z" fill="#fff" stroke="#444" stroke-width=".8"/>
        <g><circle cx="1090" cy="538" r="8" fill="#86b420"/><circle cx="1080" cy="547" r="7" fill="#8f8c93"/><path d="M1084 540l12 1 2 9-9 7-7-5z" fill="#8f8c93"/><path d="M1087 556l8-12 9 7-11 11z" fill="#1450a0"/><circle cx="1090" cy="558" r="7" fill="#1450a0"/><circle cx="1101" cy="547" r="6.500" fill="#1450a0"/><circle cx="1101" cy="547" r="2.800" fill="#fff"/><circle cx="1090" cy="547" r="4.500" fill="#3c9ce8"/></g>
        <text x="1114" y="547" font-size="23" font-weight="800" fill="#1a4f94">KITECH</text>
        <text x="1115" y="561" font-size="10" fill="#5a5a60" font-weight="500">한국생산기술연구원</text>
        <g stroke-width="2.500" fill="none"><path d="M1213 558V543" stroke="#1020a8"/><path d="M1213 558l10-6" stroke="#128a2c"/><path d="M1213 558l12 4" stroke="#d43c14"/></g>
        <path d="M1213 534l3.500 9h-7z" fill="#1428c8"/><path d="M1228 549l-3 7-4-6z" fill="#128a2c"/><path d="M1231 565l-8 1 2-7z" fill="#e0441a"/><circle cx="1213" cy="558" r="2" fill="#c8b020"/>
        <g font-size="9" fill="#777"><text x="1213" y="531">Z</text><text x="1231" y="548" fill="#4a9c5c">Y</text><text x="1235" y="568">X</text></g>
      </svg>
      <div class="vbar position-absolute d-flex align-items-center"><button class="hl" aria-label="선택"><svg class="i16"><use href="#sel1"/></svg></button><button aria-label="교차 선택"><svg class="i16"><use href="#sel2"/></svg></button><i class="sep"></i><button aria-label="선택 방식"><svg class="i16"><use href="#sel3"/></svg></button><svg class="mx-1" width="5" height="3"><use href="#dn"/></svg><i class="sep"></i>
        <select class="pick1 px-1" aria-label="필터"><option>기본</option></select><span class="arr"><svg width="5" height="3"><use href="#dn"/></svg></span><select class="pick2 ps-2" aria-label="대상"><option>솔리드 (D)</option></select><span class="arr"><svg width="5" height="3"><use href="#dn"/></svg></span><i class="sep me-1"></i>
        <button aria-label="선 선택"><svg class="i16"><use href="#ln1"/></svg></button><button aria-label="선 선택 2"><svg class="i16"><use href="#ln1"/></svg></button><button aria-label="목록"><svg width="12" height="12" opacity=".4"><use href="#lst"/></svg></button><i class="sep"></i><button aria-label="해제"><svg class="i16"><use href="#nox"/></svg></button><button aria-label="면 선택"><svg class="i16"><use href="#selb"/></svg></button><i class="sep"></i><button aria-label="커서"><svg class="i16"><use href="#curo"/></svg></button><button aria-label="커서 해제"><svg class="i16"><use href="#curx"/></svg></button><i class="sep"></i><button aria-label="속성"><svg class="i16"><use href="#selg"/></svg></button></div>
    </section>
    <nav class="dtabs d-flex"><svg class="mt-1 ms-1" width="6" height="9" viewBox="1 0 6 9"><path d="M6 1L2 4.500 6 8z" fill="none" stroke="#8a9099"/></svg>
      <svg width="25" height="18" viewBox="0 0 25 18"><path d="M5 0c6 2 9 17 18 17.500h2V0z" fill="#e4e8ed"/><path d="M5 0c6 2 9 17 18 17.500h2" fill="none" stroke="#9aa3ae"/></svg>
      <a href="#" class="fst"><svg width="14" height="14"><use href="#doc"/></svg>NXGT1</a><svg width="13" height="18" viewBox="0 0 13 18"><path d="M0 0c6 2 4 17 13 18V0z" fill="#fff"/><path d="M0 0c6 2 4 17 13 17.500H0" fill="none" stroke="#9aa3ae"/></svg>
      <a href="#" class="cur"><svg width="14" height="14"><use href="#doc"/></svg>속초시 3D 해석(page 16-분할)<svg width="7" height="7"><use href="#x"/></svg></a>
      <a href="#"><svg width="14" height="14"><use href="#doc"/></svg>속초시 3D 해석(page 27-요소크기지정)</a><a href="#"><svg width="14" height="14"><use href="#doc"/></svg>속초시 3D 해석(page 31-굴착부지.중간말뚝)</a><a href="#"><svg width="14" height="14"><use href="#doc"/></svg>속초시 3D 해석</a>
      <svg class="mt-1 ms-auto me-2" width="8" height="9" viewBox="0 0 8 9"><path d="M2 1l4 3.500L2 8z" fill="none" stroke="#8a9099"/></svg></nav>
    <div class="phead">출력창<svg class="ms-auto" width="7" height="7"><use href="#pin"/></svg><svg width="7" height="7"><use href="#x"/></svg></div>
    <div class="out d-flex flex-shrink-0"><div class="flex-fill"><p>&gt; 라이선스가 인증되었습니다.</p><p>&gt; 유지보수 기간이 193일 남았습니다.</p><p>&gt; [실행취소] 솔리드 분할하기</p><p>&gt; [다시실행] 솔리드 분할하기</p></div>
      <div class="vscroll d-flex flex-column align-items-center justify-content-between py-1"><svg width="7" height="5" viewBox="0 0 8 5"><path d="M0 5l4-4 4 4" fill="none" stroke="#333" stroke-width="1.500"/></svg><div class="thumb w-100 mt-3" style="height:25px"></div><svg width="7" height="5" viewBox="0 0 8 5"><path d="M0 0l4 4 4-4" fill="none" stroke="#333" stroke-width="1.500"/></svg></div></div>
  </div>
  <aside class="side d-flex flex-column flex-shrink-0"><button><svg width="10" height="10" viewBox="0 0 10 10"><circle cx="5" cy="5" r="4.500" fill="#8cc084" stroke="#7a9a6a"/><path d="M1 6c2-2 6-2 8 0" stroke="#e8f4e4" stroke-width="2" fill="none"/></svg><span>작업패널</span></button><button><svg width="10" height="10" viewBox="0 0 10 10"><circle cx="5" cy="5" r="4.500" fill="#8cc084" stroke="#7a9a6a"/><path d="M1 6c2-2 6-2 8 0" stroke="#e8f4e4" stroke-width="2" fill="none"/></svg><span>작업패널</span></button></aside>
</main>
<footer class="status d-flex flex-shrink-0 justify-content-end"><div class="st1">W: 12,2533, 75,4615</div><div class="st2">X: 0~68,2437 Y: 0~47,1053 Z:0~70</div><div class="st3">G:[244] N:[0] E:[0]</div><span class="chev"><select aria-label="힘 단위"><option>kN</option></select><svg width="6" height="4"><use href="#cv"/></svg></span><span class="chev"><select aria-label="길이 단위"><option>m</option></select><svg width="6" height="4"><use href="#cv"/></svg></span><span class="chev me-5"><select aria-label="시간 단위"><option>sec</option></select><svg width="6" height="4"><use href="#cv"/></svg></span></footer>
<script src="https://cdn.jsdelivr.net/npm/bootstrap@5.3.0/dist/js/bootstrap.bundle.min.js"></script>
</body>
</html>
